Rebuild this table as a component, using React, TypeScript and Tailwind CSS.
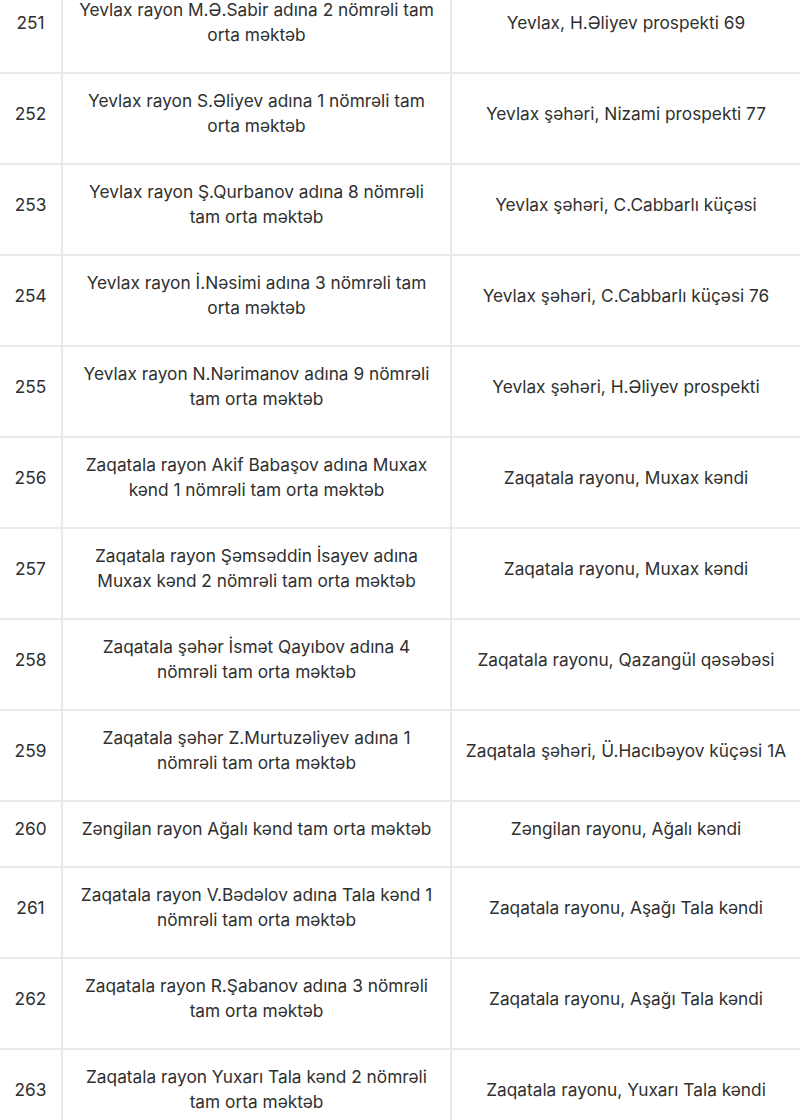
const rows = [
  { n: 251, name: 'Yevlax rayon M.Ə.Sabir adına 2 nömrəli tam orta məktəb', addr: 'Yevlax, H.Əliyev prospekti 69' },
  { n: 252, name: 'Yevlax rayon S.Əliyev adına 1 nömrəli tam orta məktəb', addr: 'Yevlax şəhəri, Nizami prospekti 77' },
  { n: 253, name: 'Yevlax rayon Ş.Qurbanov adına 8 nömrəli tam orta məktəb', addr: 'Yevlax şəhəri, C.Cabbarlı küçəsi' },
  { n: 254, name: 'Yevlax rayon İ.Nəsimi adına 3 nömrəli tam orta məktəb', addr: 'Yevlax şəhəri, C.Cabbarlı küçəsi 76' },
  { n: 255, name: 'Yevlax rayon N.Nərimanov adına 9 nömrəli tam orta məktəb', addr: 'Yevlax şəhəri, H.Əliyev prospekti' },
  { n: 256, name: 'Zaqatala rayon Akif Babaşov adına Muxax kənd 1 nömrəli tam orta məktəb', addr: 'Zaqatala rayonu, Muxax kəndi' },
  { n: 257, name: 'Zaqatala rayon Şəmsəddin İsayev adına Muxax kənd 2 nömrəli tam orta məktəb', addr: 'Zaqatala rayonu, Muxax kəndi' },
  { n: 258, name: 'Zaqatala şəhər İsmət Qayıbov adına 4 nömrəli tam orta məktəb', addr: 'Zaqatala rayonu, Qazangül qəsəbəsi' },
  { n: 259, name: 'Zaqatala şəhər Z.Murtuzəliyev adına 1 nömrəli tam orta məktəb', addr: 'Zaqatala şəhəri, Ü.Hacıbəyov küçəsi 1A' },
  { n: 260, name: 'Zəngilan rayon Ağalı kənd tam orta məktəb', addr: 'Zəngilan rayonu, Ağalı kəndi' },
  { n: 261, name: 'Zaqatala rayon V.Bədəlov adına Tala kənd 1 nömrəli tam orta məktəb', addr: 'Zaqatala rayonu, Aşağı Tala kəndi' },
  { n: 262, name: 'Zaqatala rayon R.Şabanov adına 3 nömrəli tam orta məktəb', addr: 'Zaqatala rayonu, Aşağı Tala kəndi' },
  { n: 263, name: 'Zaqatala rayon Yuxarı Tala kənd 2 nömrəli tam orta məktəb', addr: 'Zaqatala rayonu, Yuxarı Tala kəndi' },
]

// every cell centers its text inside the same asymmetric padding
const cell = 'flex flex-col justify-center pt-[14px] pb-[25px]'

export default function App() {
  return (
    <div className="h-[1120px] w-[800px] overflow-hidden bg-white font-['Inter',sans-serif] text-[17.3px] leading-[25px] text-[#303030]">
      <div className="-mt-[17px]">
        {rows.map((r) => (
          <div key={r.n} className="flex border-b-2 border-[#e9e9ef] text-center">
            <div className={`${cell} w-[63px] shrink-0 border-r-2 border-[#e9e9ef]`}>{r.n}</div>
            <div className={`${cell} w-[389px] shrink-0 border-r-2 border-[#e9e9ef] px-3`}>{r.name}</div>
            <div className={`${cell} flex-1 px-3`}>{r.addr}</div>
          </div>
        ))}
      </div>
    </div>
  )
}
